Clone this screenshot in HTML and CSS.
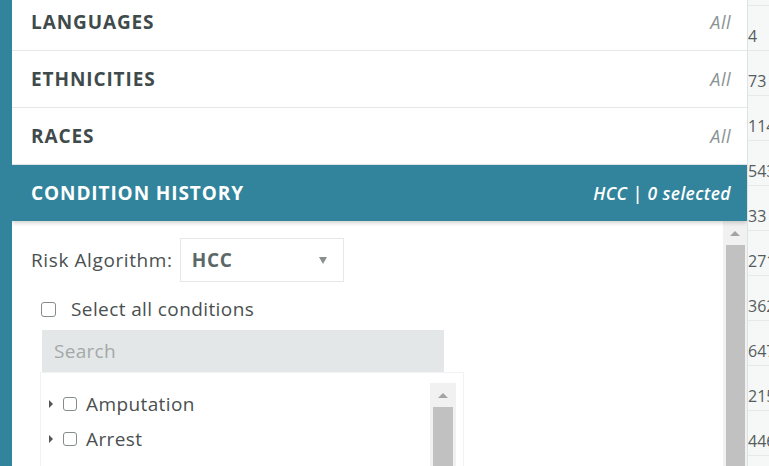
FILE: index.html
```html
<!DOCTYPE html>
<html>
<head>
<meta charset="utf-8">
<link rel="stylesheet" href="styles.css">
</head>
<body>
<div class="page">
  <div class="strip"></div>
  <div class="panel">
    <div class="row first"><span class="title">LANGUAGES</span><span class="val">All</span></div>
    <div class="row"><span class="title">ETHNICITIES</span><span class="val">All</span></div>
    <div class="row"><span class="title">RACES</span><span class="val">All</span></div>
    <div class="row active"><span class="title">CONDITION HISTORY</span><span class="val">HCC | 0 selected</span></div>
    <div class="body">
      <div class="content">
        <div class="algo">
          <span class="algo-label">Risk Algorithm:</span>
          <div class="select"><span>HCC</span><span class="caret"></span></div>
        </div>
        <label class="selall"><span class="cb"></span><span>Select all conditions</span></label>
        <div class="search">Search</div>
        <div class="tree">
          <div class="items">
            <div class="item"><span class="tri"></span><span class="cb small"></span><span>Amputation</span></div>
            <div class="item"><span class="tri"></span><span class="cb small"></span><span>Arrest</span></div>
          </div>
          <div class="sb inner"><div class="arrow"></div><div class="thumb"></div></div>
        </div>
      </div>
      <div class="sb outer"><div class="arrow"></div><div class="thumb"></div></div>
    </div>
  </div>
  <div class="table">
    <div class="trow top"></div>
    <div class="trow">4</div>
    <div class="trow">73</div>
    <div class="trow">114</div>
    <div class="trow">543</div>
    <div class="trow">33</div>
    <div class="trow">271</div>
    <div class="trow">362</div>
    <div class="trow">647</div>
    <div class="trow">215</div>
    <div class="trow">446</div>
  </div>
</div>
</body>
</html>
```

FILE: styles.css
```css
* { box-sizing: border-box; }
html, body { margin: 0; padding: 0; }
body {
  width: 769px; height: 466px; overflow: hidden;
  font-family: "Open Sans", "Noto Sans", sans-serif;
  background: #fff;
}
.page { display: flex; height: 466px; overflow: hidden; }
.strip { width: 12px; background: #31849b; flex: none; }
.panel { width: 735px; flex: none; display: flex; flex-direction: column; background: #fff; position: relative; z-index: 1; overflow: hidden; }
.row {
  height: 57px; flex: none; display: flex; align-items: center; justify-content: space-between;
  padding: 0 16px 0 19px; border-bottom: 1px solid #e5e8e8;
}
.row.first { margin-top: -6px; }
.title { font-weight: 700; font-size: 19px; color: #3f4b4b; letter-spacing: 0.9px; }
.val { font-style: italic; font-size: 18px; color: #8a9494; letter-spacing: 0.5px; }
.row.active { background: #31849b; border-bottom: none; height: 56px; position: relative; z-index: 2; box-shadow: 0 2px 4px rgba(0,0,0,0.18); }
.row.active .title, .row.active .val { color: #fff; }
.row.active .val { font-weight: 600; font-size: 17.5px; letter-spacing: 0.4px; }
.body { flex: 1; display: flex; min-height: 0; }
.content { flex: 1; padding: 17px 0 0 19px; }
.algo { display: flex; align-items: center; height: 44px; }
.algo-label { font-size: 19px; color: #4a5050; margin-right: 7px; letter-spacing: 0.6px; }
.select {
  width: 164px; height: 44px; border: 1px solid #e6e8e8; display: flex; align-items: center;
  justify-content: space-between; padding: 0 16px 0 11px; font-weight: 700; font-size: 19px; color: #5c6767; letter-spacing: 0.8px;
}
.caret { width: 0; height: 0; border-left: 4px solid transparent; border-right: 4px solid transparent; border-top: 7px solid #8a8f8f; }
.selall { display: flex; align-items: center; margin: 9px 0 0 10px; height: 36px; font-size: 19px; color: #4a5050; letter-spacing: 0.4px; }
.cb { width: 15px; height: 15px; border: 1px solid #858c8c; border-radius: 3px; margin-right: 15px; flex: none; background: #fff; }
.search {
  margin: 3px 0 0 11px; width: 402px; height: 42px; background: #e3e7e7; color: #a3a9a9;
  font-size: 19px; display: flex; align-items: center; padding-left: 12px; letter-spacing: 0.3px;
}
.tree {
  margin: 0 0 0 9px; width: 424px; height: 94px; border: 1px solid #f1f2f2; border-bottom: none;
  display: flex; padding-top: 10px;
}
.items { flex: 1; padding: 3px 0 0 8px; }
.item { display: flex; align-items: center; height: 35px; font-size: 19px; color: #4a5050; letter-spacing: 0.4px; }
.tri { width: 0; height: 0; border-left: 4px solid #555; border-top: 4px solid transparent; border-bottom: 4px solid transparent; margin-right: 10px; }
.cb.small { width: 14px; height: 14px; margin-right: 9px; }
.sb { display: flex; flex-direction: column; align-items: center; background: #f1f1f1; flex: none; }
.sb .arrow { width: 0; height: 0; border-left: 5px solid transparent; border-right: 5px solid transparent; border-bottom: 5px solid #a3a3a3; margin: 10px 0 9px; }
.sb .thumb { width: 100%; flex: 1; background: #c1c1c1; }
.sb.inner { width: 26px; margin-right: 7px; }
.sb.inner .thumb { width: 20px; }
.sb.outer { width: 24px; }
.sb.outer .thumb { width: 19px; }
.table { flex: 1; background: #f6f7f7; border-left: 1px solid #dfe2e2; overflow: hidden; }
.trow { height: 45px; border-bottom: 1px solid #e6e9e9; font-size: 16px; color: #555d5d; padding-top: 22px; line-height: 16px; white-space: nowrap; }
.trow.top { height: 6px; padding: 0; }
```
